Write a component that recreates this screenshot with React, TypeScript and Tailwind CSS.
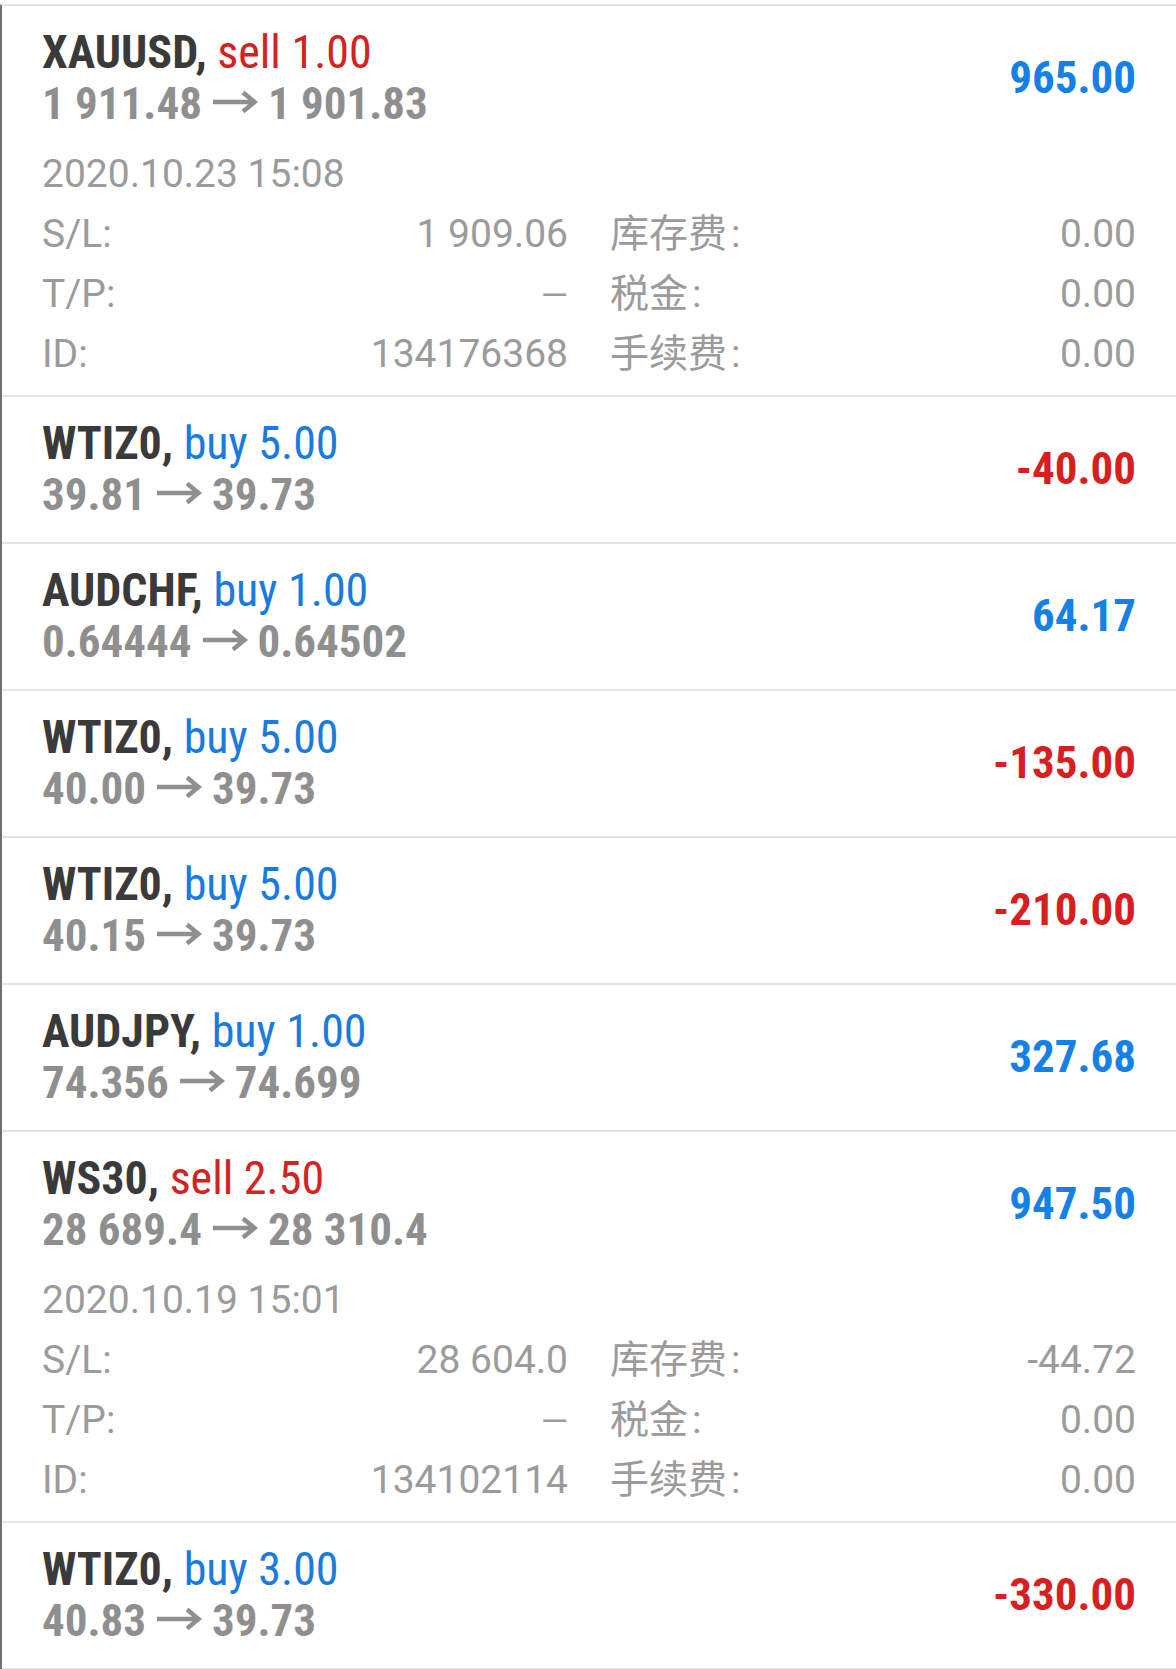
import React from 'react';

interface Details {
  time: string;
  sl: string;
  tp: string;
  id: string;
  swap: string;
  tax: string;
  fee: string;
}

interface Trade {
  symbol: string;
  side: 'buy' | 'sell';
  volume: string;
  open: string;
  close: string;
  profit: string;
  details?: Details;
}

const trades: Trade[] = [
  {
    symbol: 'XAUUSD',
    side: 'sell',
    volume: '1.00',
    open: '1 911.48',
    close: '1 901.83',
    profit: '965.00',
    details: {
      time: '2020.10.23 15:08',
      sl: '1 909.06',
      tp: '—',
      id: '134176368',
      swap: '0.00',
      tax: '0.00',
      fee: '0.00',
    },
  },
  { symbol: 'WTIZ0', side: 'buy', volume: '5.00', open: '39.81', close: '39.73', profit: '-40.00' },
  { symbol: 'AUDCHF', side: 'buy', volume: '1.00', open: '0.64444', close: '0.64502', profit: '64.17' },
  { symbol: 'WTIZ0', side: 'buy', volume: '5.00', open: '40.00', close: '39.73', profit: '-135.00' },
  { symbol: 'WTIZ0', side: 'buy', volume: '5.00', open: '40.15', close: '39.73', profit: '-210.00' },
  { symbol: 'AUDJPY', side: 'buy', volume: '1.00', open: '74.356', close: '74.699', profit: '327.68' },
  {
    symbol: 'WS30',
    side: 'sell',
    volume: '2.50',
    open: '28 689.4',
    close: '28 310.4',
    profit: '947.50',
    details: {
      time: '2020.10.19 15:01',
      sl: '28 604.0',
      tp: '—',
      id: '134102114',
      swap: '-44.72',
      tax: '0.00',
      fee: '0.00',
    },
  },
  { symbol: 'WTIZ0', side: 'buy', volume: '3.00', open: '40.83', close: '39.73', profit: '-330.00' },
];

// price arrow, drawn so the stroke weight matches the bold numbers
const Arrow = () => (
  <svg width="46" height="34" viewBox="0 0 46 34" className="mx-[10px] inline-block align-baseline" fill="none">
    <path d="M1 17H42M31 7.5L42.5 17L31 26.5" stroke="#8f8f8f" strokeWidth="4.5" strokeLinejoin="miter" />
  </svg>
);

const DetailLine: React.FC<{ label: string; value: string; label2: string; value2: string }> = ({
  label,
  value,
  label2,
  value2,
}) => (
  <div className="flex h-[60px] items-center">
    <div className="flex w-[526px] items-baseline justify-between">
      <span>{label}</span>
      {value === '—' ? <span className="text-[35px]">{value}</span> : <span>{value}</span>}
    </div>
    <div className="ml-[42px] flex flex-1 justify-between">
      <span>
        {label2}
        <span className="ml-[4px]">:</span>
      </span>
      <span>{value2}</span>
    </div>
  </div>
);

const TradeRow: React.FC<{ trade: Trade }> = ({ trade }) => {
  const loss = trade.profit.startsWith('-');
  return (
    <div className="border-b-2 border-[#e4e4e4] pl-[40px] pr-[40px] pt-[20px]">
      <div className="flex items-center justify-between font-['Roboto',sans-serif] font-stretch-condensed leading-[52px]">
        <div>
          <div className="text-[46px]">
            <span className="font-bold text-[#3a3a3a]">{trade.symbol},</span>{' '}
            <span className={trade.side === 'sell' ? 'text-[#d42222]' : 'text-[#1a7bdf]'}>
              {trade.side} {trade.volume}
            </span>
          </div>
          <div className="text-[45px] font-bold text-[#8f8f8f]">
            {trade.open}
            <Arrow />
            {trade.close}
          </div>
        </div>
        <div className={`text-[45px] font-bold ${loss ? 'text-[#d71f1f]' : 'text-[#1580e6]'}`}>{trade.profit}</div>
      </div>
      {trade.details ? (
        <div className="mt-[14px] pb-[11px] font-['Roboto','Noto_Sans_CJK_SC',sans-serif] text-[39px] text-[#9b9b9b]">
          <div className="flex h-[60px] items-center">{trade.details.time}</div>
          <DetailLine label="S/L:" value={trade.details.sl} label2="库存费" value2={trade.details.swap} />
          <DetailLine label="T/P:" value={trade.details.tp} label2="税金" value2={trade.details.tax} />
          <DetailLine label="ID:" value={trade.details.id} label2="手续费" value2={trade.details.fee} />
        </div>
      ) : (
        <div className="h-[21px]" />
      )}
    </div>
  );
};

export default function App() {
  return (
    <div className="min-h-[1669px] w-[1176px] bg-white pt-[4px]">
      <div className="min-h-[1665px] border-l-2 border-t-2 border-[#e4e4e4] border-l-[#707070]">
        {trades.map((t, i) => (
          <TradeRow key={i} trade={t} />
        ))}
      </div>
    </div>
  );
}
